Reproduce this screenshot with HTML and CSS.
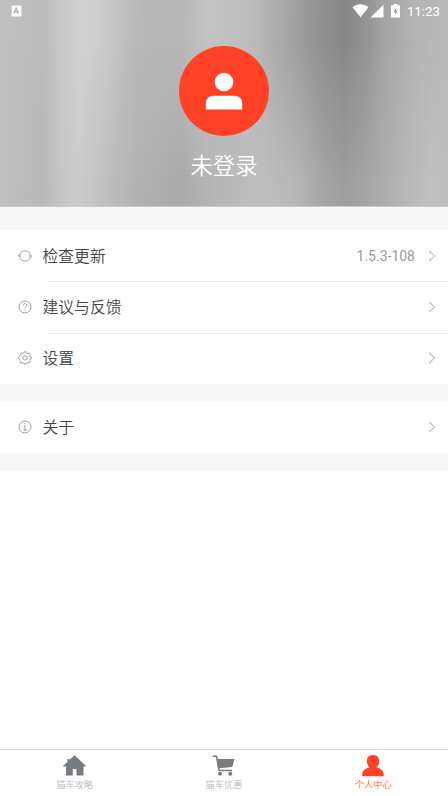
FILE: index.html
```html
<!DOCTYPE html>
<html lang="zh-CN">
<head>
<meta charset="utf-8">
<title>个人中心</title>
<link rel="stylesheet" href="styles.css">
</head>
<body>
<div class="app">
  <header class="hero">
    <div class="status">
      <svg class="status-app" width="11" height="12" viewBox="0 0 11 12"><rect x=".5" y=".5" width="10" height="11" rx="1" fill="#fff" fill-opacity=".93"/><path d="M3 8.5 5.2 3.2 7.4 8.5M3.8 7H6.6" fill="none" stroke="#aaa" stroke-width="1.1"/></svg>
      <div class="status-right">
        <svg width="50" height="14" viewBox="0 0 50 14" fill="#fff"><path d="M1.500 3.200C6.500-.7 12.500-.7 17.500 3.200L9.500 13.200ZM32.500 .8V13.500H19.500ZM42.500 0H46.500V1.300H49V13.500H40V1.300H42.500Z"/><path d="M45.300 3.500 42.700 7.900H44.300L43.700 11.200 46.500 6.700H44.800Z" fill="#8f8f8f"/></svg>
        <span class="clock">11:23</span>
      </div>
    </div>
    <div class="avatar"><svg width="38" height="38" viewBox="0 0 38 38" fill="#fff"><circle cx="19" cy="10" r="9.300"/><path d="M.8 37.500V31.500C.8 27 4 23.800 8.500 23.800H29.500C34 23.800 37.200 27 37.200 31.500V37.500Z"/></svg></div>
    <div class="name">未登录</div>
  </header>
  <main>
    <section class="group">
      <div class="row">
        <svg class="icon" viewBox="0 0 14 14"><path d="M1.500 6.200A5.700 5.700 0 0 1 12.700 6.800M12.500 8A5.700 5.700 0 0 1 1.400 7.200M0 7.600 1.400 5.500 3 7.600M11 6.300 12.600 8.400 14 6.300"/></svg>
        <div class="cell"><span class="label">检查更新</span><span class="value">1.5.3-108</span><svg class="arrow" viewBox="0 0 8 12"><path d="M1 .8 6.500 6 1 11.200"/></svg></div>
      </div>
      <div class="row">
        <svg class="icon" viewBox="0 0 14 14"><circle cx="7" cy="7" r="6"/><path d="M5 5.500C5.100 2.900 9 3 8.900 5.300 8.800 6.500 7 6.700 7 8.300M7 9.500V10.500"/></svg>
        <div class="cell"><span class="label">建议与反馈</span><svg class="arrow" viewBox="0 0 8 12"><path d="M1 .8 6.500 6 1 11.200"/></svg></div>
      </div>
      <div class="row">
        <svg class="icon" viewBox="0 0 14 14"><path d="M5.500 1.900 6 .9H8L8.500 1.900 10 2.500 11.200 2.100 12.200 3.600 11.800 4.700 12.300 5.700 13.300 6.200V7.800L12.300 8.300 11.800 9.300 12.200 10.400 11.200 11.900 10 11.500 8.500 12.100 8 13.100H6L5.500 12.100 4 11.500 2.800 11.900 1.800 10.400 2.200 9.300 1.700 8.300 .7 7.800V6.200L1.700 5.700 2.200 4.700 1.800 3.600 2.800 2.100 4 2.500Z"/><circle cx="7" cy="7" r="2.100"/></svg>
        <div class="cell"><span class="label">设置</span><svg class="arrow" viewBox="0 0 8 12"><path d="M1 .8 6.500 6 1 11.200"/></svg></div>
      </div>
    </section>
    <section class="group about">
      <div class="row">
        <svg class="icon" viewBox="0 0 14 14"><circle cx="7" cy="7" r="6"/><path d="M7 3.200V4.400M5.700 6H7V10.300M5.400 10.400H8.700"/></svg>
        <div class="cell"><span class="label">关于</span><svg class="arrow" viewBox="0 0 8 12"><path d="M1 .8 6.500 6 1 11.200"/></svg></div>
      </div>
    </section>
  </main>
  <nav class="tabs">
    <div class="tab"><svg width="24" height="22" viewBox="0 0 24 22"><path d="M11.500 .3 22.800 10.800V11.500H20.500V20.500H13.500V14H9.800V20.500H3V11.500H.2V10.800L4.500 6.800V4H6.500V5Z"/></svg><span>猫车攻略</span></div>
    <div class="tab"><svg width="24" height="22" viewBox="0 0 24 22"><path d="M.8 1.200H4.500L7 15.500H20" fill="none" stroke="#777c80" stroke-width="1.600"/><path d="M5 4H22.500L20.300 12 6.500 13.200Z"/><circle cx="8" cy="18.800" r="2"/><circle cx="18.300" cy="18.800" r="2"/></svg><span>猫车优惠</span></div>
    <div class="tab active"><svg width="24" height="22" viewBox="0 0 24 22"><path d="M12 0C19 0 20 8 15.500 12.200 20 13.500 22.800 15.500 22.800 20.500Q22.800 21.200 22 21.200H2Q1.200 21.200 1.200 20.500C1.200 15.500 4 13.500 8.500 12.200 4 8 5 0 12 0Z"/></svg><span>个人中心</span></div>
  </nav>
</div>
</body>
</html>
```
FILE: styles.css
```css
* { box-sizing: border-box; }
body {
  margin: 0;
  background: #fff;
  font-family: Roboto, "Noto Sans CJK SC", sans-serif;
}
svg { display: block; flex: none; }
.app { height: 796px; display: flex; flex-direction: column; }
.hero {
  position: relative;
  isolation: isolate;
  height: 207px;
  flex: none;
  display: flex;
  flex-direction: column;
  align-items: center;
  color: #fff;
  border-bottom: 1px solid #ccc;
  background: linear-gradient(91deg, #c0c0c0 0, #bcbcbc 46px, #c9c9c9 63px, #d2d2d2 82px, #cdcdcd 101px, #bfbfbf 125px, #b9b9b9 142px, #b8b8b8 180px, #c3c3c3 210px, #bdbdbd 250px, #b0b0b0 270px, #9e9e9e 300px, #909090 322px, #888 345px, #929292 365px, #a4a4a4 385px, #b2b2b2 412px, #bbb 448px);
}
.hero::before {
  content: "";
  position: absolute;
  inset: 0;
  z-index: -1;
  background: linear-gradient(90deg, #c1c1c1 0, #b8b8b8 42px, #c9c9c9 68px, #cbcbcb 80px, #c1c1c1 101px, #b2b2b2 135px, #aaa 180px, #b5b5b5 214px, #bfbfbf 262px, #b5b5b5 300px, #a4a4a4 325px, #9e9e9e 345px, #a6a6a6 370px, #b4b4b4 400px, #c0c0c0 430px, #bdbdbd 448px);
  mask-image: linear-gradient(transparent 20%, #000 90%);
}
.status {
  width: 100%;
  height: 22px;
  padding: 4px 8px 0 11px;
  display: flex;
  justify-content: space-between;
}
.status-app { margin-top: 1px; }
.status-right { display: flex; gap: 6px; }
.clock { font-size: 13.3px; font-weight: 400; line-height: 15px; color: #fff; }
.avatar {
  width: 90px;
  height: 90px;
  margin-top: 24px;
  border-radius: 50%;
  background: #ff4127;
  display: grid;
  place-items: center;
}
.name { margin-top: 14px; font-size: 22.300px; line-height: 32px; font-weight: 350; }
main { flex: 1; }
.group { border: solid #f7f7f7; border-width: 23px 0 18px; }
.group.about { border-width: 0 0 18px; }
.row { height: 51.300px; padding-left: 18px; display: flex; align-items: center; }
.about .row { height: 51px; }
.icon { width: 14px; height: 14px; margin-right: 10.500px; fill: none; stroke: #888; stroke-width: .8; }
.cell {
  position: relative;
  flex: 1;
  height: 100%;
  padding-right: 12px;
  display: flex;
  align-items: center;
  color: #43474a;
  font-size: 15.800px;
  line-height: 24px;
  font-weight: 350;
}
.label { padding-top: 2px; }
.row + .row .cell::before {
  content: "";
  position: absolute;
  top: 0;
  left: 5px;
  right: 0;
  height: 1px;
  background: #ebebeb;
}
.value { margin-left: auto; color: #999; font-size: 14px; font-weight: 400; }
.arrow { width: 8px; height: 12px; margin-left: auto; fill: none; stroke: #999; stroke-width: 1; }
.value + .arrow { margin-left: 13px; }
.tabs { height: 47px; flex: none; display: flex; border-top: 1px solid #ddd; }
.tab {
  flex: 1;
  display: flex;
  flex-direction: column;
  align-items: center;
  padding-top: 5px;
  color: #b9bac5;
  font-size: 9.200px;
  line-height: 14px;
  font-weight: 350;
}
.tab svg { fill: #777c80; }
.tab span { margin-top: 1px; }
.tab.active { color: #ff6532; }
.tab.active svg { fill: #ff4127; }
```
